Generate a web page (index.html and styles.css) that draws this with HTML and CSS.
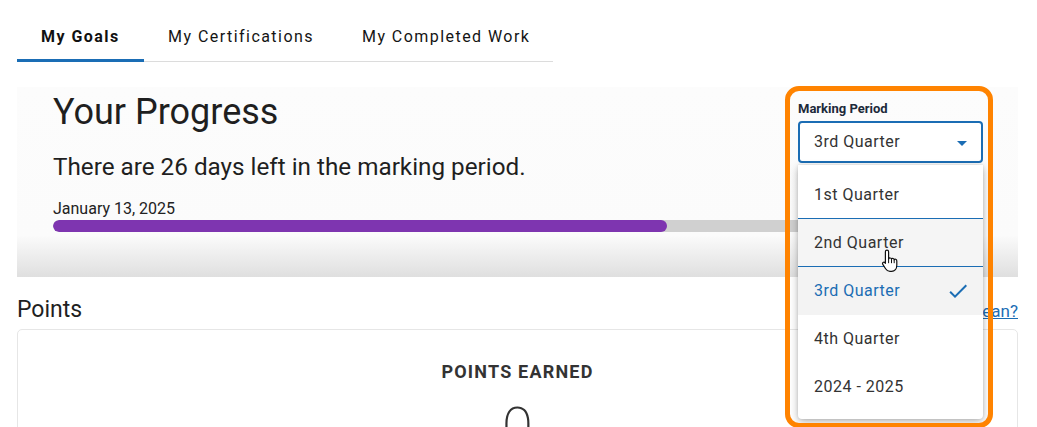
FILE: index.html
```html
<!DOCTYPE html>
<html lang="en">
<head>
<meta charset="utf-8">
<title>My Goals</title>
<link rel="stylesheet" href="styles.css">
</head>
<body>
<div class="page">
  <nav class="tabs">
    <a class="tab tab-active">My Goals</a>
    <a class="tab">My Certifications</a>
    <a class="tab">My Completed Work</a>
  </nav>

  <section class="progress">
    <div class="progress-head">
      <div class="progress-text">
        <h1 class="progress-title">Your Progress</h1>
        <p class="days">There are 26 days left in the marking period.</p>
      </div>
      <div class="period">
        <div class="period-label">Marking Period</div>
        <div class="select">
          <span>3rd Quarter</span>
          <span class="caret"></span>
        </div>
        <ul class="menu">
          <li class="menu-item menu-sep">1st Quarter</li>
          <li class="menu-item menu-sep menu-hover">2nd Quarter
            <svg class="cursor" width="19" height="24" viewBox="0 0 19 24">
              <path d="M6 1.2C6.9 1.2 7.6 1.9 7.6 2.8V10C7.8 9.2 8.6 8.8 9.4 9C10 9.1 10.5 9.6 10.5 10.3C10.7 9.6 11.5 9.3 12.2 9.5C12.8 9.7 13.1 10.2 13.2 10.8C13.5 10.3 14.1 10.1 14.7 10.3C15.4 10.6 15.8 11.1 15.8 11.9V16.3C15.8 19.5 13.8 22.3 10.6 22.3H9C6.9 22.3 5.6 21.3 4.6 19.7L1.8 15.4C1.3 14.7 1.5 13.8 2.1 13.4C2.8 13 3.6 13.3 4.1 13.9L4.4 14.3V2.8C4.4 1.9 5.1 1.2 6 1.2Z" fill="#fff" stroke="#111" stroke-width="1.2" stroke-linejoin="round"/>
              <path d="M10.5 10.3V14.2M13.2 10.8V14.2M7.6 10V14.2" stroke="#111" stroke-width="1" fill="none"/>
            </svg>
          </li>
          <li class="menu-item menu-selected">3rd Quarter
            <svg class="check" width="24" height="24" viewBox="0 0 24 24"><path d="M9 16.17L4.83 12l-1.42 1.41L9 19 21 7l-1.41-1.41z" fill="#1b6db4"/></svg>
          </li>
          <li class="menu-item">4th Quarter</li>
          <li class="menu-item">2024 - 2025</li>
        </ul>
        <div class="period-frame"></div>
      </div>
    </div>
    <div class="date">January 13, 2025</div>
    <div class="bar"><div class="bar-fill" style="width:66%"></div></div>
  </section>

  <div class="points-head">
    <h2 class="points-title">Points</h2>
    <a class="points-link">What do these mean?</a>
  </div>
  <section class="card">
    <div class="card-title">POINTS EARNED</div>
    <div class="big-number">0</div>
  </section>
</div>
</body>
</html>
```

FILE: styles.css
```css
html, body {
  margin: 0;
  padding: 0;
  background: #ffffff;
}
body {
  font-family: Roboto, "Liberation Sans", Arial, sans-serif;
  color: #212121;
  overflow: hidden;
}
.page {
  padding: 0 19px 0 17px;
}

/* Tabs */
.tabs {
  display: flex;
  width: 536px;
  border-bottom: 1px solid #dcdcdc;
}
.tab {
  display: block;
  padding: 25px 24px 10px 24px;
  font-size: 16px;
  line-height: 24px;
  letter-spacing: 1.45px;
  color: #141414;
  border-bottom: 3px solid transparent;
  margin-bottom: -1px;
  white-space: nowrap;
}
.tab-active {
  font-weight: 700;
  color: #111111;
  border-bottom-color: #1a6db5;
  padding-right: 24.5px;
}

/* Progress */
.progress {
  margin-top: 25px;
  padding: 4px 35px 45px 36px;
  background: linear-gradient(to bottom, #fcfcfc 0%, #fbfbfb 78%, #dfdfdf 100%);
}
.progress-head {
  display: flex;
  justify-content: space-between;
  align-items: flex-start;
}
.progress-title {
  margin: 0;
  font-size: 36px;
  line-height: 42px;
  font-weight: 400;
  color: #1f1f1f;
}
.days {
  margin: 19.5px 0 0 0;
  font-size: 24.25px;
  line-height: 28px;
  color: #1f1f1f;
}
.date {
  margin-top: 18px;
  font-size: 16px;
  line-height: 20px;
  color: #222222;
}
.bar {
  margin-top: 1.5px;
  height: 12px;
  border-radius: 6px;
  background: #d0d0d0;
  overflow: hidden;
}
.bar-fill {
  height: 100%;
  background: #7e35b0;
  border-radius: 6px;
}

/* Marking period select */
.period {
  position: relative;
  width: 185px;
  margin-top: 10px;
}
.period-label {
  font-size: 13px;
  line-height: 16px;
  font-weight: 700;
  color: #1c2a3a;
}
.select {
  margin-top: 4px;
  height: 42px;
  box-sizing: border-box;
  border: 2px solid #1b6db4;
  border-radius: 4px;
  background: #ffffff;
  padding: 0 14px;
  display: flex;
  align-items: center;
  justify-content: space-between;
  font-size: 16px;
  line-height: 24px;
  letter-spacing: 0.5px;
  color: #333333;
}
.caret {
  width: 0;
  height: 0;
  border-left: 5px solid transparent;
  border-right: 5px solid transparent;
  border-top: 5px solid #1b6db4;
  margin-top: 2px;
}
.menu {
  position: absolute;
  top: 64px;
  left: 0;
  right: 0;
  z-index: 5;
  margin: 0;
  padding: 6px 0 8px 0;
  list-style: none;
  background: #ffffff;
  border-radius: 0 0 4px 4px;
  box-shadow: 0 3px 8px rgba(0, 0, 0, 0.28), 0 0 3px rgba(0, 0, 0, 0.12);
}
.menu-item {
  position: relative;
  height: 48px;
  box-sizing: border-box;
  padding: 0 13px 0 16px;
  display: flex;
  align-items: center;
  justify-content: space-between;
  font-size: 16px;
  line-height: 24px;
  letter-spacing: 0.5px;
  color: #333333;
}
.menu-sep {
  border-bottom: 1px solid #1b6db4;
}
.menu-hover {
  background: #f5f5f5;
}
.menu-selected {
  background: #f3f3f3;
  color: #1b6db4;
}
.check {
  display: block;
}
.cursor {
  position: absolute;
  left: 83px;
  top: 30px;
  z-index: 7;
}
.period-frame {
  position: absolute;
  top: -15px;
  left: -13px;
  right: -10px;
  height: 342px;
  box-sizing: border-box;
  border: 5px solid #ff8300;
  border-radius: 14px;
  z-index: 6;
  pointer-events: none;
}

/* Points */
.points-head {
  margin-top: 18.5px;
  display: flex;
  justify-content: space-between;
  align-items: baseline;
}
.points-title {
  margin: 0;
  font-size: 23px;
  line-height: 28px;
  font-weight: 400;
  color: #1f1f1f;
}
.points-link {
  font-size: 17px;
  color: #1b6db4;
  text-decoration: underline;
}
.card {
  margin-top: 5.5px;
  border: 1px solid #e6e6e6;
  border-radius: 5px;
  background: #ffffff;
  padding-top: 30px;
  height: 200px;
  text-align: center;
}
.card-title {
  font-size: 18px;
  line-height: 24px;
  font-weight: 700;
  letter-spacing: 1.2px;
  color: #333333;
}
.big-number {
  margin-top: 15.5px;
  font-size: 56px;
  line-height: 56px;
  font-weight: 200;
  color: #333333;
}
```
